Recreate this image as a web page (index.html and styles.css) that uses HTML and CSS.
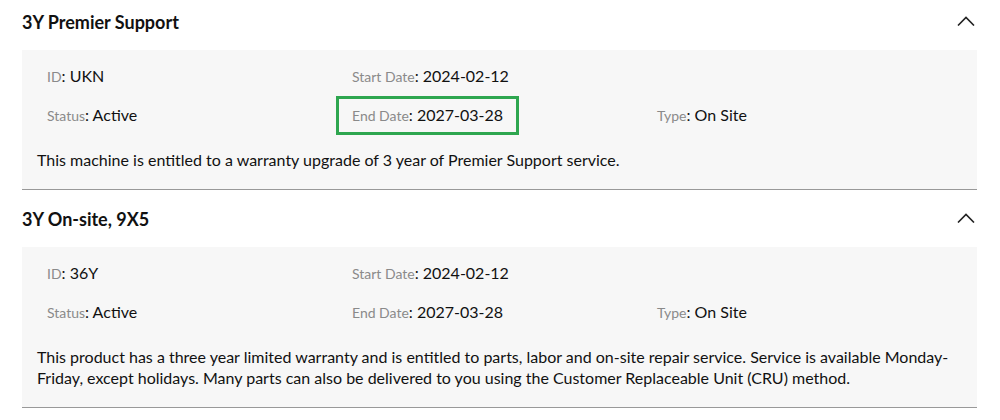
FILE: index.html
```html
<!DOCTYPE html>
<html lang="en">
<head>
  <meta charset="UTF-8">
  <title>Warranty</title>
  <link rel="stylesheet" href="styles.css">
</head>
<body>
  <div class="container">
    <!-- Premier Support -->
    <div class="warranty">
      <div class="warranty-header">
        <h2 class="warranty-title">3Y Premier Support</h2>
        <svg class="chevron" width="18" height="10" viewBox="0 0 18 10"><path d="M1 9.5 L9 1.5 L17 9.5" fill="none" stroke="#222" stroke-width="1.6"/></svg>
      </div>
      <div class="warranty-body">
        <div class="field-grid">
          <div><span class="field"><span class="label">ID</span>: UKN</span></div>
          <div><span class="field"><span class="label">Start Date</span>: 2024-02-12</span></div>
          <div></div>
          <div><span class="field"><span class="label">Status</span>: Active</span></div>
          <div><span class="field highlight"><span class="label">End Date</span>: 2027-03-28</span></div>
          <div><span class="field"><span class="label">Type</span>: On Site</span></div>
        </div>
        <p class="description">This machine is entitled to a warranty upgrade of 3 year of Premier Support service.</p>
      </div>
    </div>

    <!-- On-site -->
    <div class="warranty">
      <div class="warranty-header">
        <h2 class="warranty-title">3Y On-site, 9X5</h2>
        <svg class="chevron" width="18" height="10" viewBox="0 0 18 10"><path d="M1 9.5 L9 1.5 L17 9.5" fill="none" stroke="#222" stroke-width="1.6"/></svg>
      </div>
      <div class="warranty-body">
        <div class="field-grid">
          <div><span class="field"><span class="label">ID</span>: 36Y</span></div>
          <div><span class="field"><span class="label">Start Date</span>: 2024-02-12</span></div>
          <div></div>
          <div><span class="field"><span class="label">Status</span>: Active</span></div>
          <div><span class="field"><span class="label">End Date</span>: 2027-03-28</span></div>
          <div><span class="field"><span class="label">Type</span>: On Site</span></div>
        </div>
        <p class="description">This product has a three year limited warranty and is entitled to parts, labor and on-site repair service. Service is available Monday-Friday, except holidays. Many parts can also be delivered to you using the Customer Replaceable Unit (CRU) method.</p>
      </div>
    </div>
  </div>
</body>
</html>
```

FILE: styles.css
```css
body {
  font-family: Lato, 'Liberation Sans', sans-serif;
  margin: 0;
  padding: 0;
  background: white;
  color: #111;
}

.container {
  width: 955px;
  margin: -7px 0 0 22px;
}

.warranty-header {
  height: 57px;
  display: flex;
  align-items: center;
  justify-content: space-between;
}

.warranty-title {
  margin: 0;
  font-size: 18px;
  font-weight: 700;
  color: #111;
}

.chevron {
  margin-right: 2px;
  margin-top: -2px;
}

.warranty-body {
  background-color: #f7f7f7;
  border-bottom: 1px solid #999;
  padding: 7px 15px 19px 15px;
}

.field-grid {
  display: grid;
  grid-template-columns: 305px 305px 1fr;
  margin-left: -6px;
}

.field {
  display: inline-block;
  padding: 6px 13px;
  border: 3px solid transparent;
  font-size: 16px;
  line-height: 20px;
  color: #111;
}

.field.highlight {
  border-color: #2ea64f;
}

.label {
  font-size: 14px;
  color: #8a8a8a;
}

.description {
  margin: 14px 0 0 0;
  font-size: 16px;
  line-height: 21px;
  color: #111;
}
```
